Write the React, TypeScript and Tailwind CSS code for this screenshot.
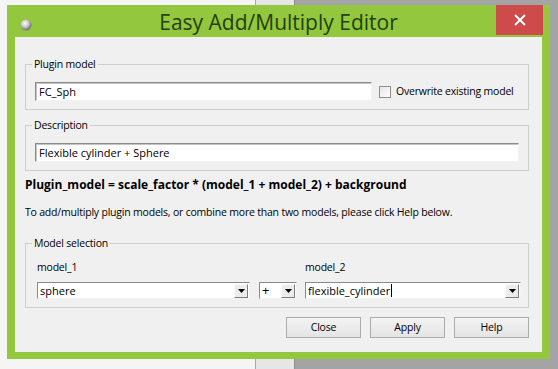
import React from 'react';

const font = { fontFamily: '"Open Sans", "Noto Sans", sans-serif' };

const small = "text-[10.5px] tracking-[-0.2px]";

const fieldCls =
  "h-[19px] bg-white border border-t-[#8a8a8a] border-l-[#8a8a8a] border-r-[#f2f2f2] border-b-[#f2f2f2] shadow-[inset_1px_1px_0_#c4c4c4] pl-[3px] flex items-center text-[11px] text-black leading-none";

const DropArrow: React.FC = () => (
  <div className="w-[14px] h-[14px] mr-px bg-[#ececec] border border-t-[#fafafa] border-l-[#fafafa] border-r-[#7d7d7d] border-b-[#7d7d7d] flex items-center justify-center">
    <svg width="7" height="4" viewBox="0 0 7 4">
      <path d="M0 0h7L3.5 4z" fill="#000" />
    </svg>
  </div>
);

const Combo: React.FC<{ value: string; width: string; caret?: boolean; big?: boolean }> = ({ value, width, caret, big }) => (
  <div className={`${width} h-[17px] bg-white border border-t-[#8a8a8a] border-l-[#8a8a8a] border-r-[#f2f2f2] border-b-[#f2f2f2] flex items-center`}>
    <div className={`flex-1 flex items-center pl-[2px] ${big ? "text-[13px]" : "text-[11px]"} text-black leading-none`}>
      <span>{value}</span>
      {caret && <span className="w-px h-[13px] bg-black ml-px" />}
    </div>
    <DropArrow />
  </div>
);

const GroupLabel: React.FC<{ text: string }> = ({ text }) => (
  <div className={`-mt-[8px] ml-[6px] px-[2px] w-fit bg-[#f0f0f0] h-[14px] leading-[14px] ${small} text-black`}>
    {text}
  </div>
);

const DialogButton: React.FC<{ label: string }> = ({ label }) => (
  <button className={`w-[75px] h-[21px] border border-[#acacac] bg-gradient-to-b from-[#f3f3f3] to-[#e4e4e4] ${small} text-black leading-none`}>
    {label}
  </button>
);

export default function App() {
  return (
    <div className="relative w-[558px] h-[369px] overflow-hidden" style={font}>
      {/* desktop behind the window */}
      <div className="flex h-full">
        <div className="w-[255px] bg-[#f5f5f5]" />
        <div className="w-[40px] bg-[#e6e6e6] border-l border-r border-l-[#a8a8a8] border-r-[#8c8c8c]" />
        <div className="flex-1 bg-[#a4a4a4]" />
      </div>

      {/* dialog window */}
      <div className="absolute left-[7px] top-[5px] w-[543px] h-[354px] bg-[#93c83e] flex flex-col">
        <div className="h-[32px] relative flex items-center justify-center">
          <svg className="absolute left-[13px] top-[14px]" width="12" height="12" viewBox="0 0 12 12">
            <defs>
              <radialGradient id="knob" cx="40%" cy="35%" r="65%">
                <stop offset="0" stopColor="#ffffff" />
                <stop offset="0.5" stopColor="#c8c8c8" />
                <stop offset="1" stopColor="#6e6e6e" />
              </radialGradient>
            </defs>
            <circle cx="6" cy="6" r="5.5" fill="url(#knob)" />
          </svg>
          <span className="text-[21px] text-[#24400c] mt-[3px]">Easy Add/Multiply Editor</span>
          <div className="absolute right-[7px] top-0 w-[47px] h-[30px] bg-[#cd4b4b] flex items-center justify-center">
            <svg width="12" height="12" viewBox="0 0 12 12">
              <path d="M1 1l10 10M11 1L1 11" stroke="#fff" strokeWidth="2" />
            </svg>
          </div>
        </div>

        <div className="flex-1 mx-[8px] mb-[7px] bg-[#f0f0f0] pt-[27px] pl-[10px] pr-[13px] flex flex-col">
          {/* Plugin model */}
          <div className="h-[46px] border border-[#cdcdcd] flex flex-col">
            <GroupLabel text="Plugin model" />
            <div className="mt-[11px] pl-[9px] flex items-center">
              <div className={`${fieldCls} w-[337px]`}>FC_Sph</div>
              <div className="ml-[7px] w-[12px] h-[12px] border border-[#8e8e8e] bg-gradient-to-br from-[#e6e6e6] to-[#ffffff]" />
              <span className={`ml-[5px] ${small} text-black`}>Overwrite existing model</span>
            </div>
          </div>

          {/* Description */}
          <div className="mt-[15px] h-[46px] border border-[#cdcdcd] flex flex-col">
            <GroupLabel text="Description" />
            <div className="mt-[11px] pl-[9px] flex">
              <div className={`${fieldCls} w-[484px]`}>Flexible cylinder + Sphere</div>
            </div>
          </div>

          <div className="mt-[6px] h-[16px] leading-[16px] text-[12px] font-bold text-black">
            Plugin_model = scale_factor * (model_1 + model_2) + background
          </div>
          <div className={`mt-[11px] h-[16px] leading-[16px] ${small} text-black`}>
            To add/multiply plugin models, or combine more than two models, please click Help below.
          </div>

          {/* Model selection */}
          <div className="mt-[23px] h-[65px] border border-[#cdcdcd] flex flex-col">
            <GroupLabel text="Model selection" />
            <div className={`mt-[10px] flex h-[14px] leading-[14px] ${small} text-black`}>
              <span className="ml-[11px] w-[268px]">model_1</span>
              <span>model_2</span>
            </div>
            <div className="mt-[8px] pl-[11px] flex items-center">
              <Combo value="sphere" width="w-[213px]" />
              <div className="ml-[9px]">
                <Combo value="+" width="w-[38px]" big />
              </div>
              <div className="ml-[8px]">
                <Combo value="flexible_cylinder" width="w-[216px]" caret />
              </div>
            </div>
          </div>

          <div className="mt-[9px] flex justify-end gap-[9px]">
            <DialogButton label="Close" />
            <DialogButton label="Apply" />
            <DialogButton label="Help" />
          </div>
        </div>
      </div>
    </div>
  );
}
